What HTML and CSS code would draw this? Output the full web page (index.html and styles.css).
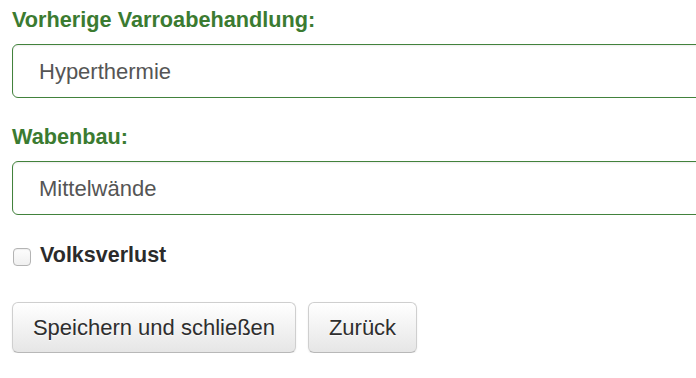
FILE: index.html
```html
<!DOCTYPE html>
<html lang="de">
<head>
<meta charset="utf-8">
<link rel="stylesheet" href="styles.css">
</head>
<body>
<form class="form">
  <div class="group">
    <label class="label" for="varroa">Vorherige Varroabehandlung:</label>
    <input class="field" id="varroa" type="text" value="Hyperthermie">
  </div>
  <div class="group">
    <label class="label" for="waben">Wabenbau:</label>
    <input class="field" id="waben" type="text" value="Mittelwände">
  </div>
  <label class="check">
    <input class="box" type="checkbox">
    <span class="check-text">Volksverlust</span>
  </label>
  <div class="actions">
    <button class="btn btn-save" type="button">Speichern und schließen</button>
    <button class="btn btn-back" type="button">Zurück</button>
  </div>
</form>
</body>
</html>
```

FILE: styles.css
```css
html, body {
  margin: 0;
  padding: 0;
  overflow: hidden;
  background: #fff;
}

body {
  font-family: "Liberation Sans", Arial, sans-serif;
}

.form {
  padding: 8px 0 0 12px;
  display: flex;
  flex-direction: column;
  align-items: flex-start;
}

.group {
  display: flex;
  flex-direction: column;
  margin-bottom: 27px;
}

.label {
  font-size: 21.7px;
  line-height: 24px;
  font-weight: bold;
  color: #3b7b31;
  margin-bottom: 12px;
}

.field {
  box-sizing: border-box;
  width: 740px;
  height: 54px;
  margin: 0;
  padding: 15px 26px 13px;
  font-family: inherit;
  font-size: 22px;
  line-height: 24px;
  color: #555;
  background: #fff;
  border: 1px solid #42823c;
  border-radius: 6px;
  box-shadow: inset 0 1px 2px rgba(0, 0, 0, 0.08);
  outline: none;
}

.check {
  display: flex;
  align-items: flex-start;
  margin-top: 1px;
  height: 24px;
}

.box {
  appearance: none;
  -webkit-appearance: none;
  box-sizing: border-box;
  width: 18px;
  height: 18px;
  margin: 5px 9px 0 1px;
  border: 1px solid #b4b4b4;
  border-radius: 4px;
  background: linear-gradient(#fdfdfd, #f0f0f0);
  box-shadow: inset 0 1px 1px rgba(0, 0, 0, 0.06);
}

.check-text {
  font-size: 21.5px;
  line-height: 24px;
  font-weight: bold;
  color: #2b2b2b;
}

.actions {
  display: flex;
  gap: 12px;
  margin-top: 35px;
}

.btn {
  box-sizing: border-box;
  height: 51px;
  padding: 12px 0;
  font-family: inherit;
  font-size: 22px;
  line-height: 25px;
  color: #2e2e2e;
  text-align: center;
  text-shadow: 0 1px 1px rgba(255, 255, 255, 0.75);
  background: linear-gradient(#ffffff, #e6e6e6);
  border: 1px solid #cfcfcf;
  border-bottom-color: #b8b8b8;
  border-radius: 6px;
  box-shadow: inset 0 1px 0 rgba(255, 255, 255, 0.2), 0 1px 2px rgba(0, 0, 0, 0.08);
}

.btn-save {
  width: 284px;
}

.btn-back {
  width: 109px;
}
```
